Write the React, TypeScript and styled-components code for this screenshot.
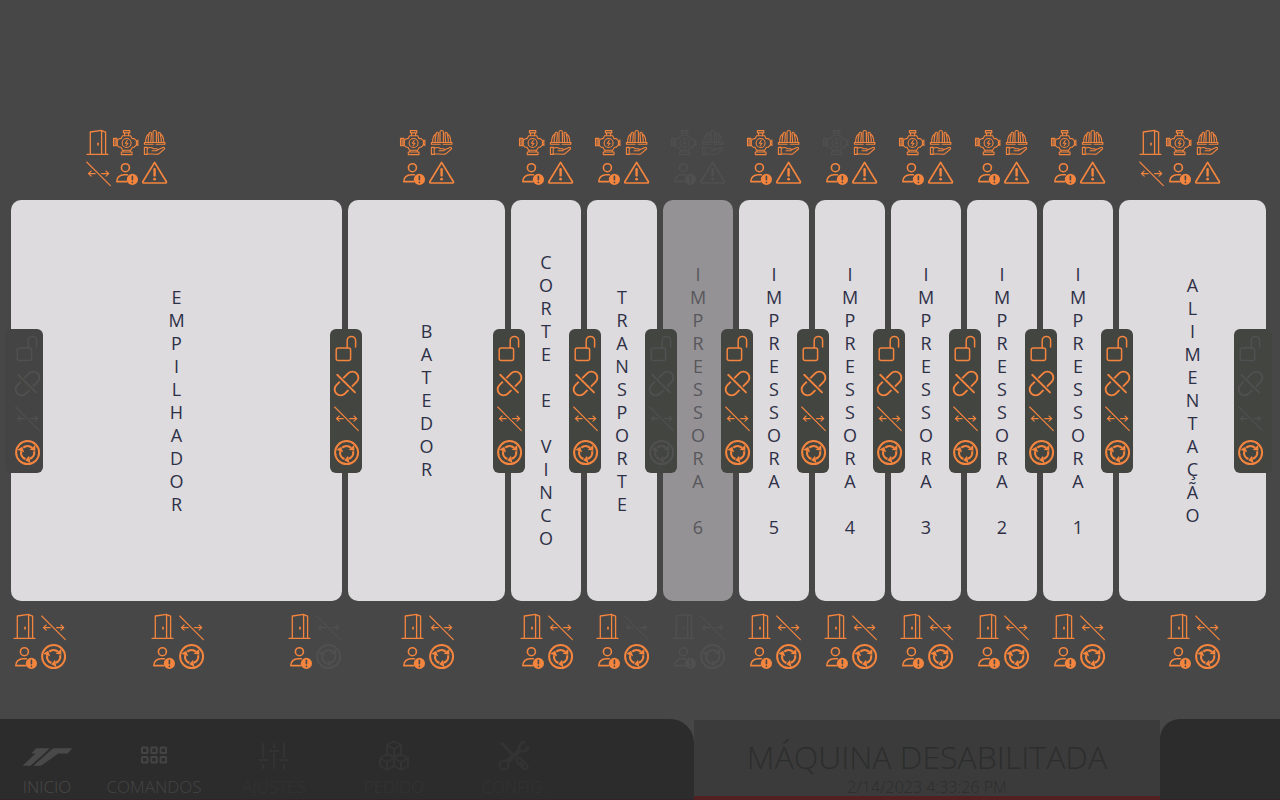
import React from "react";
import styled, { createGlobalStyle } from "styled-components";

const ORANGE = "#f4853f";
const OFF = "#505050";
const PAGE = "#474747";

const GlobalStyle = createGlobalStyle`
  * { box-sizing: border-box; }
  body {
    margin: 0;
    background: ${PAGE};
    font-family: "Open Sans", "Noto Sans", sans-serif;
  }
`;

const Page = styled.div`
  min-height: 100vh;
  display: flex;
  flex-direction: column;
  overflow: hidden;
`;

const Line = styled.main`
  flex: 1;
  display: grid;
  grid-template-columns: 331fr 157fr repeat(8, 70fr) 147fr;
  gap: 6px;
  padding: 129px 14px 48px 11px;
`;

const Station = styled.section`
  min-width: 0;
  display: flex;
  flex-direction: column;
`;

const TopRow = styled.div<{ $shift?: "start" | "end" }>`
  display: flex;
  justify-content: ${(p) => (p.$shift === "start" ? "flex-start" : "center")};
  padding-left: ${(p) => (p.$shift === "start" ? "73px" : "0")};
  padding-right: ${(p) => (p.$shift === "end" ? "28px" : "0")};
  margin-bottom: 13px;
`;

const BottomRow = styled.div<{ $spread: boolean }>`
  display: flex;
  justify-content: ${(p) => (p.$spread ? "space-between" : "center")};
  margin-top: 12px;
`;

const IconGroup = styled.div<{ $columns: number }>`
  display: grid;
  grid-template-columns: repeat(${(p) => p.$columns}, 28px);
  row-gap: 2px;
`;

const Panel = styled.div<{ $off?: boolean }>`
  position: relative;
  flex: 1;
  display: flex;
  align-items: center;
  justify-content: center;
  border-radius: 10px;
  background: ${(p) => (p.$off ? "#949295" : "#dddbde")};
  color: ${(p) => (p.$off ? "#58575b" : "#2e3047")};
`;

const VerticalName = styled.h2`
  margin: 0;
  font-size: 18px;
  font-weight: 400;
  line-height: 23px;
  text-align: center;
  white-space: pre-line;
`;

const Coupler = styled.div<{ $place: "first" | "between" | "last" }>`
  position: absolute;
  z-index: 1;
  top: 50%;
  ${(p) => (p.$place === "first" ? "left: -6px;" : p.$place === "last" ? "right: -6px;" : "right: -20px;")}
  transform: translateY(-50%);
  display: flex;
  flex-direction: column;
  align-items: ${(p) => (p.$place === "first" ? "flex-end" : "flex-start")};
  gap: 7px;
  width: ${(p) => (p.$place === "between" ? "32px" : "38px")};
  padding: 5px 2px 6px;
  border-radius: 6px;
  background: ${(p) => (p.$place === "first" ? "#444444" : "#434541")};
`;

const Glyph = styled.svg<{ $off?: boolean }>`
  display: block;
  width: 28px;
  height: 28px;
  color: ${(p) => (p.$off ? OFF : ORANGE)};
  fill: none;
  stroke: currentColor;
  stroke-linecap: round;
  stroke-linejoin: round;
`;

const Footer = styled.footer`
  display: flex;
  height: 81px;
`;

const Nav = styled.nav`
  flex: 694;
  display: grid;
  grid-template-columns: 94px repeat(4, 120px);
  background: #2c2c2c;
  border-bottom: 1px solid #34232a;
  border-top-right-radius: 24px;
`;

const NavLink = styled.a<{ $tone: string }>`
  display: flex;
  flex-direction: column;
  align-items: center;
  padding-top: 21px;
  gap: 3px;
  color: ${(p) => p.$tone};
  font-size: 17px;
  font-weight: 300;
  line-height: 24px;
  text-decoration: none;
`;

const NavGlyph = styled.svg`
  display: block;
  width: 52px;
  height: 32px;
  fill: none;
  stroke: currentColor;
  stroke-width: 2;
`;

const Status = styled.div`
  flex: 466;
  display: flex;
  flex-direction: column;
  align-items: center;
  justify-content: flex-end;
  margin-top: 1px;
  background: #3b3b3b;
  border-bottom: 4px solid #522020;
  color: #2c2e2d;
  font-weight: 300;
  white-space: nowrap;
`;

const StatusTitle = styled.h1`
  margin: 0;
  font-size: 32px;
  font-weight: 300;
  line-height: 42px;
`;

const StatusTime = styled.time`
  font-size: 16px;
  line-height: 18px;
`;

const FooterEnd = styled.div`
  flex: 120;
  background: #2c2c2c;
  border-bottom: 1px solid #34232a;
  border-top-left-radius: 20px;
`;

type IconName = "door" | "motor" | "helmet" | "slide" | "person" | "warning" | "cycle" | "lock" | "unlink";

const arrow = (
  <>
    <path d="M-4.4 -5A6.6 6.6 0 0 1 4.4 -4.8" strokeWidth="2.2" strokeLinecap="butt" />
    <path d="M7.6 -7.6L7.8 -1.8L2 -2.8Z" fill="currentColor" stroke="none" />
  </>
);

const drawings: Record<IconName, { label: string; art: React.ReactNode }> = {
  door: {
    label: "Porta",
    art: (
      <g strokeWidth="1.3">
        <path d="M3 25.3H24M6.3 25V3L17.6 1.4V25M17.6 1.6L21.6 3.2V25" />
        <path d="M14 14.2V16" strokeWidth="1.6" />
      </g>
    ),
  },
  motor: {
    label: "Motor",
    art: (
      <g strokeWidth="1.1">
        <path d="M11.4 1.6H17.8V3.9H11.4ZM12.6 4V6.6M16.6 4V6.6" />
        <path d="M10.6 6.7H18.6L20 9.6H22.3L24.4 11.6V16L22 18.3H20.4L18.6 21.3H10.6L9 18.3H7.4L5.2 16.4V11.2L7.6 9.6H9.2Z" />
        <path d="M1.5 9.4H4.9V16.8H1.5ZM3.1 9.5V16.7M24.5 12H25.8V15.6H24.5M25.9 11V16.6" />
        <circle cx="14.6" cy="14" r="4.5" />
        <path d="M15.3 11.3L13.3 14.2H16L14.1 16.8" />
        <path d="M11 21.5V23M18.2 21.5V23M9.3 23H20V25.6H9.3Z" />
      </g>
    ),
  },
  helmet: {
    label: "Proteção",
    art: (
      <g strokeWidth="1.1">
        <path d="M4.4 15.2V13.5H24.9V15.2M4.4 15.3H13.2M16.2 15.3H24.9" />
        <path d="M5.6 13.2C5.6 9 6.8 6.4 8.6 5.2M23.8 13.2C23.8 9 22.6 6.4 20.8 5.2" />
        <path d="M8.2 13V9.8L9.4 3.6Q11 2.6 11.4 4.4L10.8 12.9M21.2 13V9.8L20 3.6Q18.4 2.6 18 4.4L18.6 12.9" />
        <path d="M13 12.9V3Q13 1.5 14.7 1.5Q16.4 1.5 16.4 3V12.9" />
        <path d="M4.4 18.4H7.2V25.4H4.4ZM7.4 19.2C9.8 18 12 18.6 13.6 19.8H16.6Q18 20.4 16.8 21.7H12M17.8 20.7L23 18.4Q25.2 18.3 24.4 20L18.8 24.8Q18 25.4 16 25.3L7.4 24.8" />
      </g>
    ),
  },
  slide: {
    label: "Deslocamento",
    art: (
      <g strokeWidth="1.1">
        <path d="M2.7 3L26.4 26.7" />
        <path d="M4.6 14.6H11.2M7.2 12L4.4 14.6L7.2 17.2M17.6 14.6H24.6M22 12L24.8 14.6L22 17.2" />
      </g>
    ),
  },
  person: {
    label: "Operador",
    art: (
      <>
        <circle cx="13.4" cy="8.7" r="4" strokeWidth="1.6" />
        <path d="M14.6 22.6H4.8C4.6 18.4 8 15.8 12 15.8H15.4" strokeWidth="1.6" />
        <circle cx="20.4" cy="20.4" r="5.6" fill="currentColor" stroke="none" />
        <path d="M20.4 17.4V20.8M20.4 23.3V23.4" stroke={PAGE} strokeWidth="1.6" />
      </>
    ),
  },
  warning: {
    label: "Alerta",
    art: (
      <>
        <path d="M14.6 3.4L26.4 22.8Q26.6 24 25.4 24H3.8Q2.6 24 2.8 22.8Z" strokeWidth="1.7" />
        <path d="M14.6 10.2V16.4" strokeWidth="2.4" />
        <circle cx="14.6" cy="20.2" r="1.4" fill="currentColor" stroke="none" />
      </>
    ),
  },
  cycle: {
    label: "Ciclo",
    art: (
      <g transform="translate(14.6 13.6)">
        <circle r="11.5" strokeWidth="2" />
        <g>{arrow}</g>
        <g transform="rotate(120)">{arrow}</g>
        <g transform="rotate(240)">{arrow}</g>
      </g>
    ),
  },
  lock: {
    label: "Trava",
    art: (
      <g strokeWidth="1.5">
        <rect x="4.2" y="14" width="14.4" height="12.4" rx="2" />
        <path d="M15.2 13.8V6.6A4.2 4.2 0 0 1 23.6 6.6V13" />
      </g>
    ),
  },
  unlink: {
    label: "Acoplamento",
    art: (
      <g strokeWidth="1.9">
        <rect x="0.2" y="8.5" width="28.6" height="12" rx="6" transform="rotate(-45 14.5 14.5)" />
        <path d="M8 9.5L21 22" stroke="#434541" strokeWidth="5" strokeLinecap="butt" />
        <path d="M5.2 5.8L23 23.4" />
      </g>
    ),
  },
};

function Icon({ name, off }: { name: IconName; off?: boolean }) {
  const { label, art } = drawings[name];
  return (
    <Glyph viewBox="0 0 28 28" $off={off} role="img" aria-label={label}>
      {art}
    </Glyph>
  );
}

type StationData = {
  name: string;
  off?: boolean;
  door?: "start" | "end";
  motorOff?: boolean;
  bottomOff?: IconName[][];
  couplerOff?: boolean;
};

const stations: StationData[] = [
  { name: "EMPILHADOR", door: "start", bottomOff: [[], [], ["slide", "cycle"]] },
  { name: "BATEDOR" },
  { name: "CORTE E VINCO" },
  { name: "TRANSPORTE", bottomOff: [["slide"]], couplerOff: true },
  { name: "IMPRESSORA 6", off: true, motorOff: true, bottomOff: [["door", "slide", "person", "cycle"]] },
  { name: "IMPRESSORA 5" },
  { name: "IMPRESSORA 4", motorOff: true },
  { name: "IMPRESSORA 3" },
  { name: "IMPRESSORA 2" },
  { name: "IMPRESSORA 1" },
  { name: "ALIMENTAÇÃO", door: "end" },
];

const bottomIcons: IconName[] = ["door", "slide", "person", "cycle"];
const couplerIcons: IconName[] = ["lock", "unlink", "slide", "cycle"];

function CouplerStack({ place, off }: { place: "first" | "between" | "last"; off?: boolean }) {
  return (
    <Coupler $place={place}>
      {couplerIcons.map((icon) => (
        <Icon key={icon} name={icon} off={off || (place !== "between" && icon !== "cycle")} />
      ))}
    </Coupler>
  );
}

function StationColumn({ data, index }: { data: StationData; index: number }) {
  const top: IconName[] = data.door
    ? ["door", "motor", "helmet", "slide", "person", "warning"]
    : ["motor", "helmet", "person", "warning"];
  const bottom = data.bottomOff ?? [[]];
  return (
    <Station>
      <TopRow $shift={data.door}>
        <IconGroup $columns={data.door ? 3 : 2}>
          {top.map((icon) => (
            <Icon key={icon} name={icon} off={data.off || (icon === "motor" && data.motorOff)} />
          ))}
        </IconGroup>
      </TopRow>
      <Panel $off={data.off}>
        {index === 0 && <CouplerStack place="first" />}
        <VerticalName aria-label={data.name}>{data.name.split("").join("\n")}</VerticalName>
        <CouplerStack place={index === stations.length - 1 ? "last" : "between"} off={data.couplerOff} />
      </Panel>
      <BottomRow $spread={bottom.length > 1}>
        {bottom.map((offIcons, i) => (
          <IconGroup key={i} $columns={2}>
            {bottomIcons.map((icon) => (
              <Icon key={icon} name={icon} off={offIcons.includes(icon)} />
            ))}
          </IconGroup>
        ))}
      </BottomRow>
    </Station>
  );
}

const navItems = [
  {
    label: "INICIO",
    tone: "#494949",
    art: (
      <g fill="currentColor" stroke="none">
        <path d="M15 8.2H28.6L23.4 13.6L9.4 25.8H1.6L14.4 13.4H10.4Z" />
        <path d="M33.6 8.2H51.4L46.6 13.4H37.4L20 25.8H12.4L29 11Q31 8.4 33.6 8.2Z" />
      </g>
    ),
  },
  {
    label: "COMANDOS",
    tone: "#444444",
    art: (
      <>
        {[7.6, 17].map((y) =>
          [14, 23.3, 32.6].map((x) => (
            <rect key={`${x}-${y}`} x={x} y={y} width="5.5" height="5.5" rx="0.6" />
          ))
        )}
      </>
    ),
  },
  {
    label: "AJUSTES",
    tone: "#333333",
    art: <path d="M15 3V18M15 24V29M11 20H20M26 3V8M26 13V29M21 11H31M36 3V18M36 24V29M31 20H40" />,
  },
  {
    label: "PEDIDO",
    tone: "#343434",
    art: (
      <g strokeLinejoin="round">
        <path d="M26 1L33 5V13L26 17L19 13V5ZM19 5L26 9L33 5M26 9V17" />
        <path d="M19 14L26 18V26L19 30L12 26V18ZM12 18L19 22L26 18M19 22V30" />
        <path d="M33 14L40 18V26L33 30L26 26V18ZM26 18L33 22L40 18M33 22V30" />
      </g>
    ),
  },
  {
    label: "CONFIG.",
    tone: "#333333",
    art: (
      <>
        <path d="M12 3L16 5L18 8L27 17" strokeWidth="3" />
        <path d="M32 18L39 25Q41 29 36 29L29 22Q27 18 32 18ZM32 22L36 26" strokeWidth="2.4" />
        <path d="M19 22L33 9" strokeWidth="5" />
        <circle cx="16" cy="25" r="4.5" strokeWidth="2.4" />
        <path d="M37 2Q32 2 31 8Q32 13 36 11Q40 10 40 6" strokeWidth="3" />
      </>
    ),
  },
];

export default function App() {
  return (
    <Page>
      <GlobalStyle />
      <Line>
        {stations.map((s, i) => (
          <StationColumn key={s.name} data={s} index={i} />
        ))}
      </Line>
      <Footer>
        <Nav>
          {navItems.map((n) => (
            <NavLink key={n.label} href="#" $tone={n.tone}>
              <NavGlyph viewBox="0 0 52 32" aria-hidden="true">
                {n.art}
              </NavGlyph>
              {n.label}
            </NavLink>
          ))}
        </Nav>
        <Status>
          <StatusTitle>MÁQUINA DESABILITADA</StatusTitle>
          <StatusTime>2/14/2023 4:33:26 PM</StatusTime>
        </Status>
        <FooterEnd />
      </Footer>
    </Page>
  );
}
